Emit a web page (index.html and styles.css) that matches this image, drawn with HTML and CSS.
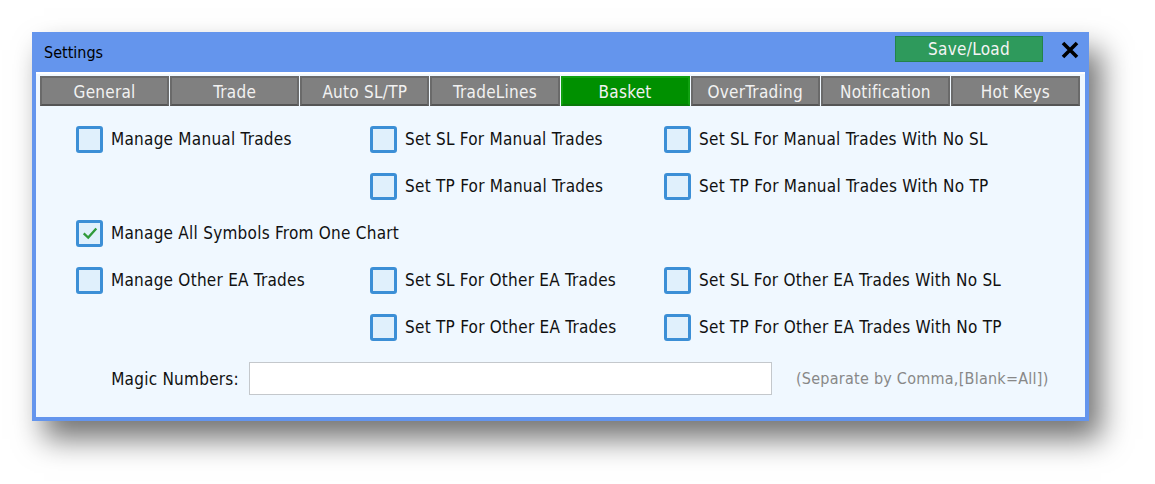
FILE: index.html
```html
<!DOCTYPE html>
<html lang="en">
<head>
    <meta charset="UTF-8">
    <title>Settings</title>
    <link rel="stylesheet" href="styles.css">
</head>
<body>
<div class="window">
    <div class="titlebar">
        <span class="title">Settings</span>
        <button class="save-btn">Save/Load</button>
        <span class="close"><svg viewBox="0 0 20 20" width="20" height="20"><path d="M3 3 L17 17 M17 3 L3 17" stroke="#000" stroke-width="3.6"/></svg></span>
    </div>
    <div class="panel">
        <div class="tabs">
            <div class="tab">General</div>
            <div class="tab">Trade</div>
            <div class="tab">Auto SL/TP</div>
            <div class="tab">TradeLines</div>
            <div class="tab active">Basket</div>
            <div class="tab">OverTrading</div>
            <div class="tab">Notification</div>
            <div class="tab">Hot Keys</div>
        </div>
        <div class="options">
            <label class="opt"><span class="box"></span>Manage Manual Trades</label>
            <label class="opt"><span class="box"></span>Set SL For Manual Trades</label>
            <label class="opt"><span class="box"></span>Set SL For Manual Trades With No SL</label>

            <span></span>
            <label class="opt"><span class="box"></span>Set TP For Manual Trades</label>
            <label class="opt"><span class="box"></span>Set TP For Manual Trades With No TP</label>

            <label class="opt wide"><span class="box checked"><svg viewBox="0 0 20 20" width="18" height="18"><path d="M3 10.5 L8 15 L17 5" fill="none" stroke="#2f9a3a" stroke-width="2.6"/></svg></span>Manage All Symbols From One Chart</label>

            <label class="opt"><span class="box"></span>Manage Other EA Trades</label>
            <label class="opt"><span class="box"></span>Set SL For Other EA Trades</label>
            <label class="opt"><span class="box"></span>Set SL For Other EA Trades With No SL</label>

            <span></span>
            <label class="opt"><span class="box"></span>Set TP For Other EA Trades</label>
            <label class="opt"><span class="box"></span>Set TP For Other EA Trades With No TP</label>
        </div>
        <div class="magic">
            <span class="magic-label">Magic Numbers:</span>
            <input type="text" class="magic-input">
            <span class="hint">(Separate by Comma,[Blank=All])</span>
        </div>
    </div>
</div>
</body>
</html>
```

FILE: styles.css
```css
html, body { height: 100%; }
body { margin: 0; background: #fff; font-family: "DejaVu Sans Condensed", "DejaVu Sans", sans-serif; font-size: 17px; letter-spacing: 0.25px; }
.window { margin: 32px 0 0 32px; width: 1057px; background: #6495ed; padding: 0 4px 4px 4px; box-sizing: border-box; box-shadow: 12px 18px 28px rgba(0,0,0,0.55); }
.titlebar { height: 40px; display: flex; align-items: center; }
.title { margin-left: 8px; color: #000; flex: 1; padding-top: 1px; letter-spacing: 0; font-size: 16px; }
.save-btn { width: 148px; height: 26px; background: #2e9a5c; border: 1px solid #23834a; color: #f4f4f4; font-family: inherit; font-size: 17px; letter-spacing: 0.3px; padding: 0; margin-top: -6px; }
.close { width: 24px; height: 20px; margin-left: 15px; margin-right: 3px; margin-top: -4px; display: flex; justify-content: center; }
.panel { background: #f0f8ff; border-top: 2px solid #fff; padding: 2px 5px 22px 4px; }
.tabs { display: flex; gap: 1px; }
.tab { flex: 1; height: 30px; box-sizing: border-box; background: #808080; border: 2px solid #6a6a6a; border-bottom-color: #555; color: #f2f2f2; display: flex; align-items: center; justify-content: center; font-size: 17px; padding-top: 1px; }
.tab.active { background: #009000; border-color: #10a010; border-bottom-color: #0a7a0a; }
.options { display: grid; grid-template-columns: 294px 294px 1fr; grid-auto-rows: 28px; row-gap: 19px; margin: 19px 0 0 36px; }
.opt { display: flex; align-items: center; color: #111; white-space: nowrap; }
.opt.wide { grid-column: 1 / 4; }
.box { width: 21px; height: 21px; border: 3px solid #3c8fd6; border-radius: 3px; background: #e0f0fc; margin-right: 8px; display: flex; align-items: center; justify-content: center; }
.magic { display: flex; align-items: center; margin-top: 21px; }
.magic-label { width: 199px; text-align: right; color: #111; }
.magic-input { width: 523px; height: 33px; box-sizing: border-box; margin-left: 10px; border: 1px solid #c4c8cc; background: #fff; }
.hint { margin-left: 24px; color: #888; font-size: 16px; }
```
